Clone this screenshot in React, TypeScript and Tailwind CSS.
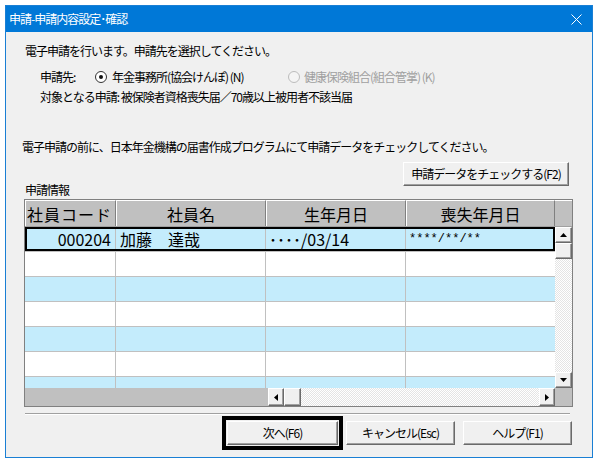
import React from "react";

const FONT = "font-['Noto_Sans_CJK_JP',sans-serif]";
const BEVEL =
  "bg-[#f0f0f0] border border-t-white border-l-white border-r-[#6a6a6a] border-b-[#6a6a6a] shadow-[inset_-1px_-1px_0_#a0a0a0]";
const DITHER =
  "bg-[repeating-conic-gradient(#ffffff_0_25%,#e4e4e4_0_50%)] bg-[length:2px_2px]";

function Tri({ dir }: { dir: "up" | "down" | "left" | "right" }) {
  const pts =
    dir === "up"
      ? "0,4 7,4 3.5,0"
      : dir === "down"
      ? "0,0 7,0 3.5,4"
      : dir === "left"
      ? "4,0 4,7 0,3.5"
      : "0,0 0,7 4,3.5";
  const w = dir === "up" || dir === "down" ? 7 : 4;
  const h = dir === "up" || dir === "down" ? 4 : 7;
  return (
    <svg width={w} height={h} viewBox={`0 0 ${w} ${h}`}>
      <polygon points={pts} fill="#000" />
    </svg>
  );
}

function ScrollBtn({ dir, cls }: { dir: "up" | "down" | "left" | "right"; cls: string }) {
  return (
    <div className={`${BEVEL} ${cls} flex items-center justify-center shrink-0`}>
      <Tri dir={dir} />
    </div>
  );
}

const rowBg = ["bg-[#c4ecfc]", "bg-white", "bg-[#c4ecfc]", "bg-white", "bg-[#c4ecfc]", "bg-white", "bg-[#c4ecfc]"];

export default function App() {
  return (
    <div className={`w-[593px] h-[461px] bg-white pl-[5px] pt-[5px] ${FONT} text-[12px] tracking-[-1px] text-black`}>
      <div className="w-[588px] h-[453px] border border-[#1a7fd4] bg-[#f0f0f0] flex flex-col">
        {/* title bar */}
        <div className="h-[26px] bg-[#0078d7] flex items-center pl-[3px] pr-[10px] text-white shrink-0">
          <span className="text-[12px] leading-[16px]">申請-申請内容設定･確認</span>
          <svg className="ml-auto" width="11" height="11" viewBox="0 0 11 11">
            <path d="M0.5 0.5 L10.5 10.5 M10.5 0.5 L0.5 10.5" stroke="#fff" strokeWidth="1" />
          </svg>
        </div>

        <div className="flex flex-col flex-1">
          <div className="mt-[11px] ml-[19px] h-[16px] leading-[16px]">
            電子申請を行います。申請先を選択してください。
          </div>

          <div className="mt-[10px] h-[16px] flex items-center leading-[16px]">
            <span className="ml-[34px] w-[55px]">申請先:</span>
            <span className="w-[12px] h-[12px] rounded-full border border-[#333333] bg-white flex items-center justify-center shrink-0">
              <span className="w-[4px] h-[4px] rounded-full bg-[#111]" />
            </span>
            <span className="ml-[5px] w-[176px] whitespace-nowrap">年金事務所(協会けんぽ) (N)</span>
            <span className="w-[12px] h-[12px] rounded-full border border-[#bcbcbc] bg-[#f4f4f4] shrink-0" />
            <span className="ml-[4px] text-[#a0a0a0] whitespace-nowrap">健康保険組合(組合管掌) (K)</span>
          </div>

          <div className="mt-[4px] ml-[34px] h-[16px] leading-[16px]">
            対象となる申請: 被保険者資格喪失届／70歳以上被用者不該当届
          </div>

          <div className="mt-[34px] ml-[16px] h-[16px] leading-[16px] whitespace-nowrap">
            電子申請の前に、日本年金機構の届書作成プログラムにて申請データをチェックしてください。
          </div>

          <div className="mt-[7px] h-[36px] flex">
            <div className="self-end ml-[19px] h-[16px] leading-[16px]">申請情報</div>
            <div className={`${BEVEL} ml-auto mr-[23px] w-[166px] h-[24px] flex items-center justify-center leading-[16px] whitespace-nowrap`}>
              申請データをチェックする(F2)
            </div>
          </div>

          {/* grid */}
          <div className="mt-[1px] ml-[18px] w-[549px] h-[208px] border border-[#808080] bg-[#c0c0c0] flex flex-col tracking-normal">
            {/* header */}
            <div className="h-[27px] flex shrink-0 text-[16px] leading-[20px] border-b border-[#a0a0a0]">
              <div className="w-[91px] border-t border-l border-white border-r border-r-[#808080] flex items-center pl-[1px] whitespace-nowrap overflow-hidden tracking-[1px]">
                社員コード
              </div>
              <div className="w-[150px] border-t border-l border-white border-r border-r-[#808080] flex items-center justify-center">
                社員名
              </div>
              <div className="w-[140px] border-t border-l border-white border-r border-r-[#808080] flex items-center justify-center">
                生年月日
              </div>
              <div className="w-[149px] border-t border-l border-white border-r border-r-[#808080] flex items-center justify-center">
                喪失年月日
              </div>
              <div className="flex-1 border-t border-white" />
            </div>

            {/* body */}
            <div className="h-[161px] flex shrink-0">
              <div className="w-[530px] overflow-hidden flex flex-col bg-white">
                {rowBg.map((bg, i) => (
                  <div key={i} className={`relative h-[25px] shrink-0 flex border-b border-[#c0c0c0] ${bg}`}>
                    <div className="w-[91px] border-r border-[#c0c0c0] flex items-center justify-end pr-[4px] text-[16px] leading-[20px]">
                      {i === 0 ? "000204" : ""}
                    </div>
                    <div className="w-[150px] border-r border-[#c0c0c0] flex items-center pl-[4px] text-[16px] leading-[20px] whitespace-nowrap">
                      {i === 0 ? "加藤　達哉" : ""}
                    </div>
                    <div className="w-[140px] border-r border-[#c0c0c0] flex items-center pl-[3px] text-[16px] leading-[20px] whitespace-nowrap">
                      {i === 0 ? "････/03/14" : ""}
                    </div>
                    <div className="w-[149px] flex items-center pl-[3px] font-['Liberation_Mono',monospace] text-[12px] leading-[16px] whitespace-nowrap">
                      {i === 0 ? "****/**/**" : ""}
                    </div>
                    {i === 0 && <div className="absolute inset-0 border-2 border-black pointer-events-none" />}
                  </div>
                ))}
              </div>
              <div className="flex-1 flex flex-col">
                <ScrollBtn dir="up" cls="h-[16px]" />
                <div className={`${BEVEL} h-[16px] shrink-0`} />
                <div className={`flex-1 ${DITHER}`} />
                <ScrollBtn dir="down" cls="h-[16px]" />
              </div>
            </div>

            {/* horizontal scrollbar */}
            <div className="h-[18px] flex shrink-0">
              <div className="w-[243px] bg-[#c0c0c0]" />
              <ScrollBtn dir="left" cls="w-[16px]" />
              <div className={`${BEVEL} w-[17px] shrink-0`} />
              <div className={`flex-1 ${DITHER}`} />
              <ScrollBtn dir="right" cls="w-[16px]" />
              <div className="w-[17px] bg-[#c0c0c0]" />
            </div>
          </div>

          {/* separator */}
          <div className="mt-[6px] ml-[19px] w-[545px] h-[2px] border-t border-[#a0a0a0] border-b border-b-white" />

          {/* buttons */}
          <div className="mt-[1px] h-[34px] flex items-center">
            <div className="ml-[216px] w-[121px] h-[34px] border-[4px] border-black p-[1px]">
              <div className={`${BEVEL} w-full h-full flex items-center justify-center leading-[16px]`}>次へ(F6)</div>
            </div>
            <div className={`${BEVEL} ml-[3px] w-[109px] h-[24px] flex items-center justify-center leading-[16px]`}>
              キャンセル(Esc)
            </div>
            <div className={`${BEVEL} ml-[8px] w-[109px] h-[24px] flex items-center justify-center leading-[16px]`}>
              ヘルプ(F1)
            </div>
          </div>
        </div>
      </div>
    </div>
  );
}
